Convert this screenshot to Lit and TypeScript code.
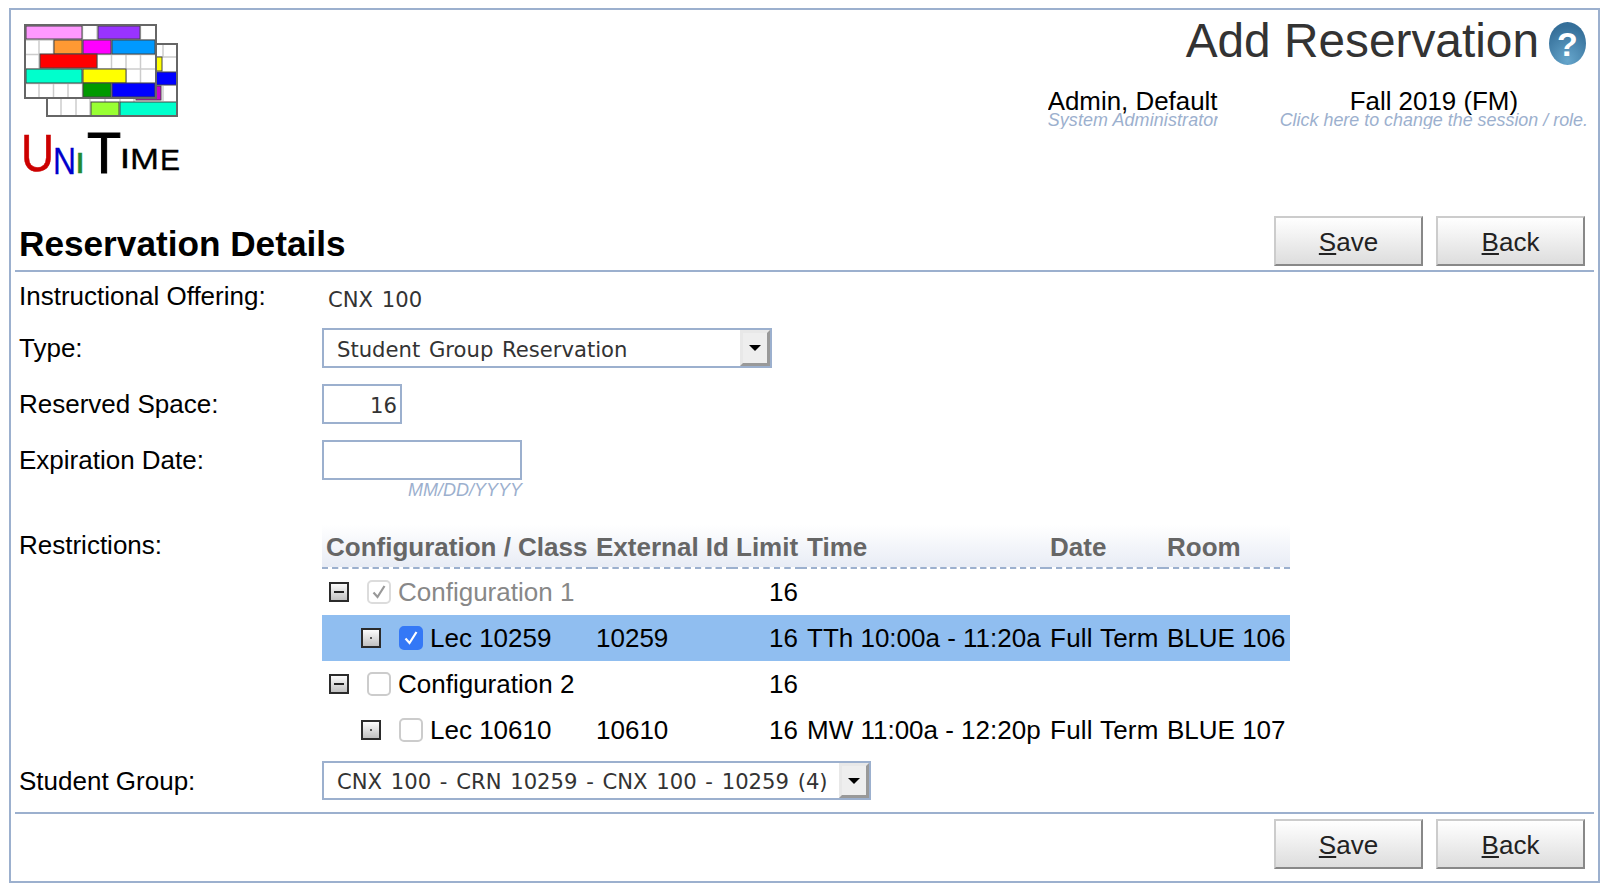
import { LitElement, html, css, svg } from 'lit';
import { customElement } from 'lit/decorators.js';
import { classMap } from 'lit/directives/class-map.js';

type Row = {
  label: string;
  child?: boolean;
  checked?: boolean;
  disabled?: boolean;
  selected?: boolean;
  extId?: string;
  limit: string;
  time?: string;
  date?: string;
  room?: string;
};

const ROWS: Row[] = [
  { label: 'Configuration 1', checked: true, disabled: true, limit: '16' },
  {
    label: 'Lec 10259',
    child: true,
    checked: true,
    selected: true,
    extId: '10259',
    limit: '16',
    time: 'TTh 10:00a - 11:20a',
    date: 'Full Term',
    room: 'BLUE 106',
  },
  { label: 'Configuration 2', limit: '16' },
  {
    label: 'Lec 10610',
    child: true,
    extId: '10610',
    limit: '16',
    time: 'MW 11:00a - 12:20p',
    date: 'Full Term',
    room: 'BLUE 107',
  },
];

// [x, y, w, h, fill] in logo coordinates
const LOGO_BACK: [number, number, number, number, string][] = [
  [132, 33, 6, 14, '#ffff00'],
  [132, 48, 21, 13, '#0000ff'],
  [112, 62, 25, 14, '#cc00cc'],
  [67, 78, 28, 14, '#99ff33'],
  [96, 78, 57, 14, '#00ffcc'],
];

const LOGO_FRONT: [number, number, number, number, string][] = [
  [2, 2, 56, 13, '#ff99ff'],
  [74, 2, 42, 13, '#9933ff'],
  [30, 16, 28, 14, '#ff9933'],
  [59, 16, 28, 14, '#ff00ff'],
  [88, 16, 43, 14, '#0099ff'],
  [16, 30, 57, 14, '#ff0000'],
  [2, 45, 56, 14, '#00ffcc'],
  [59, 45, 43, 14, '#ffff00'],
  [59, 59, 28, 14, '#009900'],
  [88, 59, 43, 14, '#0000ff'],
];

// wordmark letters: [letter, x, baseline, font size, x scale, colour, extra weight]
const WORD: [string, number, number, number, number, string, number][] = [
  ['U', 6, 55, 52, 0.88, '#cc0000', 0.6],
  ['N', 38, 58, 37, 0.86, '#0000cc', 0.3],
  ['I', 60, 57, 29, 1.25, '#228833', 0.4],
  ['T', 72, 57, 57, 0.98, '#000000', 1],
  ['I', 105, 52, 28, 1.28, '#000000', 0.5],
  ['M', 115, 53, 30, 1.16, '#000000', 0.3],
  ['E', 145, 54, 30, 1, '#000000', 0.3],
];

@customElement('app-root')
export class AppRoot extends LitElement {
  static styles = css`
    :host {
      display: block;
      font-family: 'Liberation Sans', Arial, sans-serif;
      color: #000;
      padding-top: 8px;
    }
    .frame {
      box-sizing: border-box;
      width: 1591px;
      height: 875px;
      margin-left: 9px;
      border: 2px solid #9cb0ce;
    }
    .header {
      display: flex;
      justify-content: space-between;
      height: 198px;
    }
    .logo {
      padding: 14px 0 0 13px;
      width: 170px;
    }
    .logo svg {
      display: block;
    }
    .logo svg.wordmark {
      margin: -2px 0 0 -9px;
    }
    .wordmark text {
      font-family: 'Liberation Sans', sans-serif;
    }
    .head-right {
      display: flex;
      flex-direction: column;
      align-items: flex-end;
      padding: 4px 12px 0 0;
    }
    .title-row {
      display: flex;
      align-items: flex-start;
      gap: 10px;
    }
    .title {
      font-size: 47.8px;
      line-height: 54px;
      color: #333;
    }
    .help {
      display: block;
      margin-top: 8px;
    }
    .help text {
      font-family: 'Liberation Sans', sans-serif;
      font-weight: bold;
      font-size: 34px;
      fill: #fff;
    }
    .session {
      display: flex;
      gap: 62px;
      margin-top: 18px;
    }
    .who {
      overflow: hidden;
      white-space: nowrap;
    }
    .who.user {
      width: 170px;
    }
    .who.user .role {
      letter-spacing: 0.12px;
    }
    .who.term {
      text-align: center;
      margin-right: -2px;
    }
    .who .name {
      font-size: 25.9px;
      line-height: 30px;
    }
    .who .role {
      font-size: 17.9px;
      line-height: 18px;
      margin-top: -5px;
      font-style: italic;
      color: #9cb0ce;
    }
    .title-bar {
      display: flex;
      align-items: flex-end;
      justify-content: space-between;
      height: 58px;
      margin: 0 4px 0 4px;
      padding: 0 9px 4px 4px;
      border-bottom: 2px solid #9cb0ce;
    }
    .title-bar h2 {
      margin: 0 0 -2px;
      font-size: 35.2px;
      line-height: 48px;
      font-weight: bold;
    }
    .buttons {
      display: flex;
      gap: 13px;
    }
    button {
      box-sizing: border-box;
      width: 149px;
      height: 50px;
      padding: 2px 0 0;
      border: 2px solid;
      border-color: #ccc #888 #888 #ccc;
      background: linear-gradient(#fff, #ddd);
      font-family: inherit;
      font-size: 26px;
      color: #222;
    }
    .form {
      padding-left: 8px;
    }
    .row {
      display: grid;
      grid-template-columns: 303px 1fr;
      align-items: start;
      height: 56px;
    }
    .row.first {
      height: 56px;
      padding-top: 4px;
      box-sizing: border-box;
    }
    .row.expiry {
      height: 85px;
    }
    .row.restrictions {
      height: 236px;
    }
    .row.group {
      height: 39px;
    }
    .label {
      font-size: 26px;
      line-height: 38px;
      padding-top: 1px;
    }
    .value {
      font-family: 'DejaVu Sans', sans-serif;
      font-size: 21.15px;
      word-spacing: 2px;
      color: #333;
      padding: 9px 0 0 6px;
      line-height: 30px;
    }
    .select {
      box-sizing: border-box;
      display: flex;
      align-items: center;
      justify-content: space-between;
      height: 40px;
      border: 2px solid #9cb0ce;
      font-family: 'DejaVu Sans', sans-serif;
      font-size: 21.15px;
      word-spacing: 2px;
      color: #333;
      padding-left: 13px;
    }
    .select span.text {
      padding-top: 2px;
    }
    .select.type {
      width: 450px;
    }
    .select.student {
      width: 549px;
      height: 39px;
    }
    .arrow {
      box-sizing: border-box;
      display: flex;
      align-items: center;
      justify-content: center;
      width: 30px;
      height: 100%;
      border: 3px solid;
      border-color: #e8e8e8 #999 #999 #e8e8e8;
      background: #eee;
    }
    .arrow i {
      width: 0;
      height: 0;
      border: 6px solid transparent;
      border-top-color: #000;
      border-bottom-width: 0;
    }
    input {
      display: block;
      box-sizing: border-box;
      height: 40px;
      margin: 0;
      padding: 3px 3px 0 4px;
      border: 2px solid #9cb0ce;
      outline: none;
      border-radius: 0;
      background: #fff;
      font-family: 'DejaVu Sans', sans-serif;
      font-size: 21.15px;
      color: #333;
    }
    .space {
      width: 80px;
      text-align: right;
    }
    .date-wrap {
      width: 200px;
    }
    .date {
      width: 200px;
    }
    .hint {
      text-align: right;
      font-size: 18px;
      line-height: 20px;
      font-style: italic;
      color: #9cb0ce;
      white-space: nowrap;
    }
    table {
      width: 968px;
      table-layout: fixed;
      border-collapse: collapse;
    }
    th {
      box-sizing: border-box;
      height: 43px;
      padding: 2px 0 0 4px;
      text-align: left;
      font-size: 26px;
      font-weight: bold;
      color: #666;
      white-space: nowrap;
      background: linear-gradient(#fff, #e8ecf5);
      border-bottom: 2px dashed #9cb0ce;
    }
    td {
      height: 46px;
      padding: 0 0 0 4px;
      font-size: 26px;
      white-space: nowrap;
    }
    th:nth-child(4),
    td:nth-child(4) {
      padding-left: 6px;
    }
    td:nth-child(5) {
      letter-spacing: 0.25px;
    }
    tr.selected td {
      background: #90bef0;
    }
    tr.disabled .cell span.name {
      color: #888;
    }
    td.limit {
      text-align: right;
      padding: 0 3px 0 0;
    }
    .cell {
      display: flex;
      align-items: center;
      padding-left: 3px;
    }
    .cell.child {
      padding-left: 35px;
    }
    .toggle {
      display: block;
      flex: none;
      margin-right: 18px;
    }
    .check {
      box-sizing: border-box;
      display: flex;
      align-items: center;
      justify-content: center;
      flex: none;
      width: 24px;
      height: 24px;
      margin-right: 7px;
      border: 2px solid #ccc;
      border-radius: 5px;
      background: #fff;
    }
    .check.on {
      border-color: #3478f6;
      background: #3478f6;
    }
    .check.off {
      border-color: #dcdcdc;
    }
    .footer {
      display: flex;
      justify-content: flex-end;
      margin: 12px 4px 0 4px;
      padding: 5px 9px 0 0;
      border-top: 2px solid #9cb0ce;
    }
  `;

  private toggle(open: boolean) {
    return html`<svg class="toggle" width="20" height="20" viewBox="0 0 20 20">
      <defs>
        <linearGradient id="tg" x1="0" y1="0" x2="0" y2="1">
          <stop offset="0" stop-color="#ffffff" />
          <stop offset="1" stop-color="#bdbdbd" />
        </linearGradient>
      </defs>
      <rect x="1" y="1" width="18" height="18" fill="url(#tg)" stroke="#2b2b2b" stroke-width="2" />
      ${open
        ? svg`<rect x="5" y="9" width="10" height="2" fill="#222" />`
        : svg`<rect x="9" y="9" width="2" height="2" fill="#555" />`}
    </svg>`;
  }

  private checkbox(r: Row) {
    const classes = {
      check: true,
      on: !!r.checked && !r.disabled,
      off: !!r.disabled,
    };
    const stroke = r.disabled ? '#999' : '#fff';
    return html`<span class=${classMap(classes)}>
      ${r.checked
        ? html`<svg width="18" height="18" viewBox="0 0 18 18">
            <path d="M3.5 9.5 L7.5 14 L14.5 3" fill="none" stroke=${stroke} stroke-width="2.2" />
          </svg>`
        : ''}
    </span>`;
  }

  private logo() {
    const cols = [];
    for (let x = 15; x < 130; x += 14.5) cols.push(x);
    const rows = [16, 30.5, 45, 59.5];
    return html`<svg width="156" height="94" viewBox="0 0 156 94">
      <rect x="23" y="20" width="130" height="72" fill="#fff" />
      <g stroke="#ccc" stroke-width="1.5">
        <line x1="139" y1="20" x2="139" y2="33" />
        <line x1="132" y1="33" x2="153" y2="33" />
        <line x1="139" y1="62" x2="139" y2="77" />
        ${[37, 52, 66].map((x) => svg`<line x1=${x} y1="75" x2=${x} y2="92" />`)}
        ${[81, 96, 110].map((x) => svg`<line x1=${x} y1="75" x2=${x} y2="78" />`)}
      </g>
      ${LOGO_BACK.map(
        ([x, y, w, h, c]) =>
          svg`<rect x=${x} y=${y} width=${w} height=${h} fill=${c} stroke="#444" stroke-width="1" />`
      )}
      <rect x="23" y="20" width="130" height="72" fill="none" stroke="#666" stroke-width="2" />
      <rect x="1" y="1" width="131" height="73" fill="#fff" />
      <g stroke="#ccc" stroke-width="1.5">
        ${cols.map((x) => svg`<line x1=${x} y1="1" x2=${x} y2="74" />`)}
        ${rows.map((y) => svg`<line x1="1" y1=${y} x2="132" y2=${y} />`)}
      </g>
      ${LOGO_FRONT.map(
        ([x, y, w, h, c]) =>
          svg`<rect x=${x} y=${y} width=${w} height=${h} fill=${c} stroke="#444" stroke-width="1" />`
      )}
      <rect x="1" y="1" width="131" height="73" fill="none" stroke="#666" stroke-width="2" />
    </svg>`;
  }

  private wordmark() {
    return html`<svg class="wordmark" width="170" height="64" viewBox="0 0 170 64">
      ${WORD.map(
        ([ch, x, y, size, sx, color, weight]) => svg`<text
          transform="translate(${x} ${y}) scale(${sx} 1)"
          font-size=${size}
          fill=${color}
          stroke=${color}
          stroke-width=${weight}
        >${ch}</text>`
      )}
    </svg>`;
  }

  private actions() {
    return html`<div class="buttons">
      <button><u>S</u>ave</button>
      <button><u>B</u>ack</button>
    </div>`;
  }

  render() {
    return html`
      <div class="frame">
        <div class="header">
          <div class="logo">
            ${this.logo()} ${this.wordmark()}
          </div>
          <div class="head-right">
            <div class="title-row">
              <div class="title">Add Reservation</div>
              <svg class="help" width="37" height="43" viewBox="0 0 37 43">
                <defs>
                  <radialGradient id="hg" cx="0.5" cy="0.9" r="0.8">
                    <stop offset="0" stop-color="#66a6cc" />
                    <stop offset="1" stop-color="#356f99" />
                  </radialGradient>
                </defs>
                <ellipse cx="18.5" cy="21.5" rx="18.5" ry="21.5" fill="url(#hg)" />
                <text x="18.5" y="34" text-anchor="middle">?</text>
              </svg>
            </div>
            <div class="session">
              <div class="who user">
                <div class="name">Admin, Default</div>
                <div class="role">System Administrator</div>
              </div>
              <div class="who term">
                <div class="name">Fall 2019 (FM)</div>
                <div class="role">Click here to change the session / role.</div>
              </div>
            </div>
          </div>
        </div>
        <div class="title-bar">
          <h2>Reservation Details</h2>
          ${this.actions()}
        </div>
        <div class="form">
          <div class="row first">
            <div class="label">Instructional Offering:</div>
            <div class="value">CNX 100</div>
          </div>
          <div class="row">
            <div class="label">Type:</div>
            <div class="select type">
              <span class="text">Student Group Reservation</span>
              <span class="arrow"><i></i></span>
            </div>
          </div>
          <div class="row">
            <div class="label">Reserved Space:</div>
            <input class="space" .value=${'16'} />
          </div>
          <div class="row expiry">
            <div class="label">Expiration Date:</div>
            <div class="date-wrap">
              <input class="date" />
              <div class="hint">MM/DD/YYYY</div>
            </div>
          </div>
          <div class="row restrictions">
            <div class="label">Restrictions:</div>
            ${this.renderTable()}
          </div>
          <div class="row group">
            <div class="label">Student Group:</div>
            <div class="select student">
              <span class="text">CNX 100 - CRN 10259 - CNX 100 - 10259 (4)</span>
              <span class="arrow"><i></i></span>
            </div>
          </div>
        </div>
        <div class="footer">${this.actions()}</div>
      </div>
    `;
  }

  private renderTable() {
    return html`<table>
      <colgroup>
        <col style="width:270px" />
        <col style="width:140px" />
        <col style="width:69px" />
        <col style="width:245px" />
        <col style="width:117px" />
        <col style="width:127px" />
      </colgroup>
      <thead>
        <tr>
          <th>Configuration / Class</th>
          <th>External Id</th>
          <th>Limit</th>
          <th>Time</th>
          <th>Date</th>
          <th>Room</th>
        </tr>
      </thead>
      <tbody>
        ${ROWS.map(
          (r) => html`<tr class=${classMap({ selected: !!r.selected, disabled: !!r.disabled })}>
            <td>
              <div class=${classMap({ cell: true, child: !!r.child })}>
                ${this.toggle(!r.child)} ${this.checkbox(r)}
                <span class="name">${r.label}</span>
              </div>
            </td>
            <td>${r.extId ?? ''}</td>
            <td class="limit">${r.limit}</td>
            <td>${r.time ?? ''}</td>
            <td>${r.date ?? ''}</td>
            <td>${r.room ?? ''}</td>
          </tr>`
        )}
      </tbody>
    </table>`;
  }
}
